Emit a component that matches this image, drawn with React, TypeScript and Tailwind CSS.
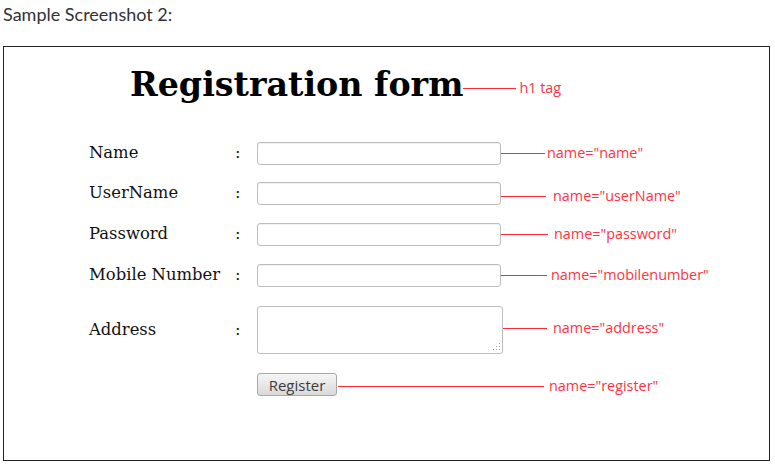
import React from "react";

const serif = { fontFamily: '"DejaVu Serif", serif' };
const ann = { fontFamily: '"Open Sans", sans-serif' };

function Annot({ line, gap, text, top }: { line: number; gap: number; text: string; top: number }) {
  return (
    <div className="flex items-start h-[16px]" style={{ marginTop: top - 8 }}>
      <div className="h-px mt-[8px] bg-[#ff2a38]" style={{ width: line }} />
      <span className="text-[14.4px] leading-[16px] text-[#ff3344] whitespace-nowrap" style={{ ...ann, marginLeft: gap }}>
        {text}
      </span>
    </div>
  );
}

function Row({ label, mt, children }: { label: string; mt: string; children: React.ReactNode }) {
  return (
    <div className={`flex items-start ${mt}`}>
      <div className="w-[146px] self-stretch flex items-center text-[16.4px] leading-none text-[#111]" style={serif}>
        {label}
      </div>
      <div className="w-[22px] self-stretch flex items-center text-[16.4px] leading-none text-[#111]" style={serif}>
        :
      </div>
      {children}
    </div>
  );
}

export default function App() {
  const input = "h-[23px] w-[244px] rounded-[3px] border border-[#bdbdbd] bg-white shadow-[inset_0_1px_1px_rgba(0,0,0,0.06)]";
  return (
    <div className="w-[775px] h-[465px] bg-white overflow-hidden">
      <div className="pl-[3px] pt-[3px] h-[46px] text-[18px] leading-[22px] text-[#333]" style={{ fontFamily: "Lato, sans-serif" }}>
        Sample Screenshot 2:
      </div>
      <div className="ml-[3px] w-[767px] h-[415px] border border-[#222] flex flex-col">
        <div className="flex items-start pl-[126px] mt-[18px] h-[40px]">
          <h1 className="text-[33.3px] font-bold leading-[40px] text-black" style={serif}>
            Registration form
          </h1>
          <Annot line={53} gap={3} text="h1 tag" top={23} />
        </div>
        <div className="flex flex-col pl-[85px]">
          <Row label="Name" mt="mt-[37px]">
            <div className={input} />
            <Annot line={44} gap={2} text='name="name"' top={11} />
          </Row>
          <Row label="UserName" mt="mt-[17px]">
            <div className={input} />
            <Annot line={45} gap={7} text='name="userName"' top={14} />
          </Row>
          <Row label="Password" mt="mt-[18px]">
            <div className={input} />
            <Annot line={47} gap={6} text='name="password"' top={11} />
          </Row>
          <Row label="Mobile Number" mt="mt-[18px]">
            <div className={input} />
            <Annot line={46} gap={4} text='name="mobilenumber"' top={11} />
          </Row>
          <Row label="Address" mt="mt-[19px]">
            <div className="relative h-[48px] w-[246px] rounded-[3px] border border-[#bdbdbd] bg-white">
              <svg className="absolute right-[1px] bottom-[1px]" width="10" height="10" viewBox="0 0 10 10">
                {[
                  [8, 1], [8, 4], [5, 4], [8, 7], [5, 7], [2, 7],
                ].map(([x, y], i) => (
                  <rect key={i} x={x} y={y} width="1" height="1" fill="#9a9a9a" />
                ))}
              </svg>
            </div>
            <Annot line={44} gap={6} text='name="address"' top={22} />
          </Row>
          <div className="flex items-start mt-[19px] pl-[168px]">
            <button
              className="h-[23px] w-[80px] rounded-[3px] border border-[#a9a9a9] bg-gradient-to-b from-[#f6f6f6] to-[#d9d9d9] text-[15px] leading-[20px] text-[#3c3c3c]"
              style={ann}
            >
              Register
            </button>
            <div className="ml-[1px]">
              <Annot line={206} gap={5} text='name="register"' top={13} />
            </div>
          </div>
        </div>
      </div>
    </div>
  );
}
